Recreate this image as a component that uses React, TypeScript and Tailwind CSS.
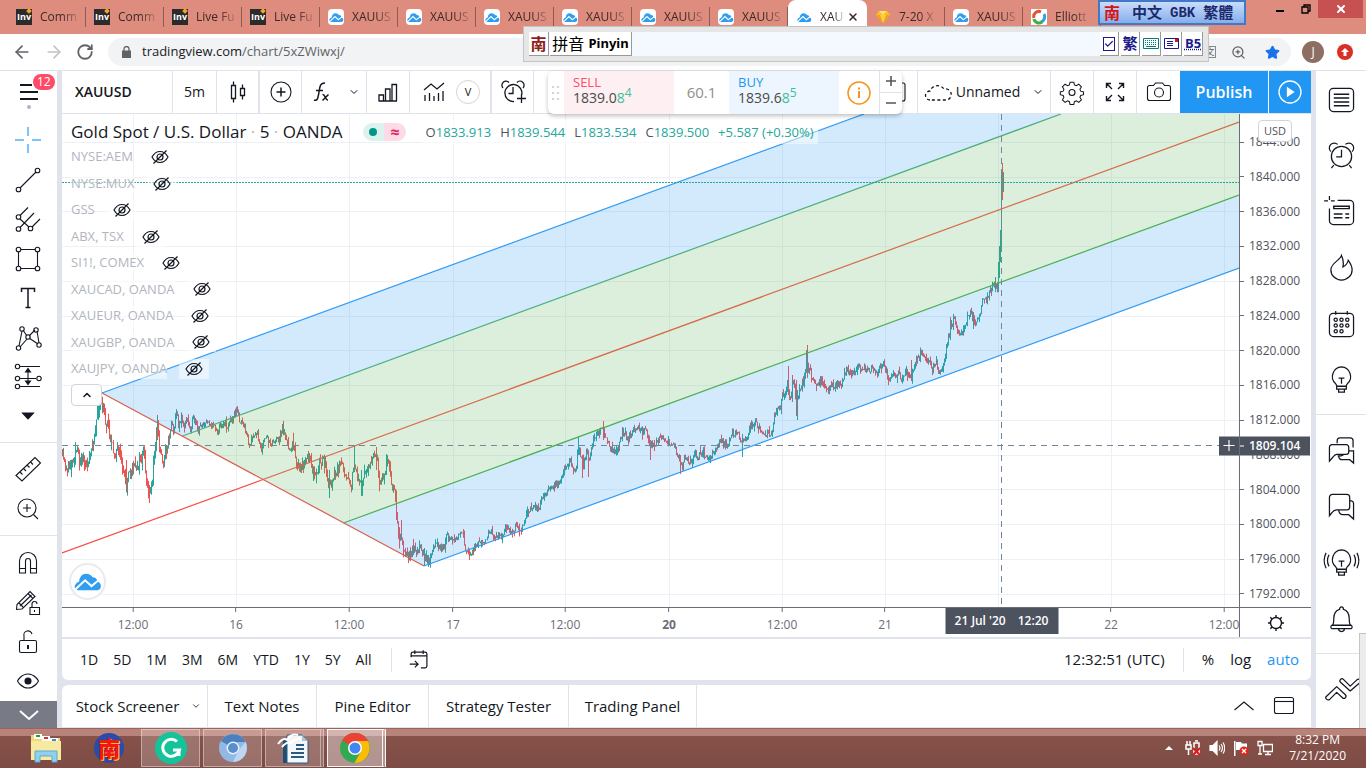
import React from "react";
import { ArrowLeft, ArrowRight, RotateCw, ZoomIn, Star, X, ChevronDown, ChevronUp, Check } from "lucide-react";

type IconProps = { children: React.ReactNode; size?: string; box?: string; width?: number };

const Icon = ({ children, size = "size-7", box = "0 0 28 28", width = 1.1 }: IconProps) => (
  <svg className={`${size} shrink-0`} viewBox={box} fill="none" stroke="currentColor" strokeWidth={width} aria-hidden="true">
    {children}
  </svg>
);

const Cloud = ({ size = "size-4" }: { size?: string }) => (
  <svg className={`${size} shrink-0`} viewBox="0 0 24 24" aria-hidden="true">
    <path d="M3.500 19A3 3 0 0 1 1 14.500Q2 12 4.500 11.500C4.500 8 7 5 10.500 5q3.500 0 5.500 3 3.500 0 4 3.500 3 1 3 4a3.500 3.500 0 0 1-3 3.500z" fill="#2f9df2" />
    <path d="M1 18.500L9.500 10.500 15 15.500 20.500 11" fill="none" stroke="#fff" strokeWidth="1.700" />
  </svg>
);

/* ---------- browser chrome ---------- */

const tabs = [
  { icon: "inv", title: "Comm" },
  { icon: "inv", title: "Comm" },
  { icon: "inv", title: "Live Fu" },
  { icon: "inv", title: "Live Fu" },
  { icon: "tv", title: "XAUUS" },
  { icon: "tv", title: "XAUUS" },
  { icon: "tv", title: "XAUUS" },
  { icon: "tv", title: "XAUUS" },
  { icon: "tv", title: "XAUUS" },
  { icon: "tv", title: "XAUUS" },
  { icon: "tv", title: "XAU", active: true },
  { icon: "gem", title: "7-20 X" },
  { icon: "tv", title: "XAUUS" },
  { icon: "wave", title: "Elliott" },
];

const TabIcon = ({ name }: { name: string }) => {
  if (name === "inv")
    return (
      <span className="relative flex size-4 shrink-0 items-center justify-center bg-[#2b2b2b] text-[9px] font-bold text-white">
        Inv
        <span className="absolute right-px top-0 size-1 rotate-45 bg-[#f5a623]" />
      </span>
    );
  if (name === "gem")
    return (
      <svg className="size-4 shrink-0" viewBox="0 0 16 16" aria-hidden="true">
        <path d="M4 2h8l3 4-7 8-7-8z" fill="#fdbc1f" />
        <path d="M4 2h8l-4 4z" fill="#ffe27a" />
        <path d="M1 6h14l-7 8z" fill="#f5a30c" />
        <path d="M5 6h6l-3 8z" fill="#ffce4a" />
      </svg>
    );
  if (name === "wave")
    return (
      <svg className="size-4 shrink-0" viewBox="0 0 16 16" fill="none" strokeWidth="3" aria-hidden="true">
        <path d="M0 0h16v16H0z" fill="#fff" />
        <path d="M3 9a5 5 0 0 1 7-6" stroke="#e2562d" />
        <path d="M13 5a5.500 5.500 0 0 1-3 8" stroke="#2aa4dc" />
        <path d="M11 13a5 5 0 0 1-8-3" stroke="#3fae49" />
      </svg>
    );
  return (
    <span className="flex size-4 shrink-0 items-center justify-center rounded-sm bg-white">
      <Cloud size="size-[15px]" />
    </span>
  );
};

const TabStrip = () => (
  <div className="flex h-[34px] shrink-0 bg-[#de8c7d] pl-2 text-xs text-[#3b2a28]">
    {tabs.map((tab, i) => (
      <div
        key={i}
        className={
          tab.active
            ? "flex w-[79px] items-center gap-1 rounded-t-lg bg-white px-2"
            : "flex w-[78px] items-center"
        }
      >
        <button
          className={
            tab.active
              ? "flex min-w-0 flex-1 items-center gap-2"
              : "flex h-5 w-full items-center gap-2 border-r border-[#8c5a52] pl-2"
          }
        >
          <TabIcon name={tab.icon} />
          <span className="whitespace-nowrap text-left [mask-image:linear-gradient(to_right,black_60%,transparent_110%)]">
            {tab.title}
          </span>
        </button>
        {tab.active && (
          <button aria-label="Close tab">
            <X className="size-3" strokeWidth={3} />
          </button>
        )}
      </div>
    ))}
    <div className="ml-auto flex items-start pr-[3px] text-black">
      <button aria-label="Minimize" className="flex h-[18px] w-7 items-center justify-center">
        <span className="mt-1 h-0.5 w-2 bg-black" />
      </button>
      <button aria-label="Restore" className="flex h-[18px] w-6 items-center justify-center">
        <Icon size="size-[10px]" box="0 0 10 10" width={1.3}>
          <path d="M1 3h6v6H1zM3 3V1h6v6H7" />
        </Icon>
      </button>
      <button aria-label="Close" className="flex h-[18px] w-[45px] items-center justify-center bg-[#c75050] text-white">
        <X className="size-3" strokeWidth={4} />
      </button>
    </div>
  </div>
);

const AddressBar = () => (
  <div className="flex h-9 shrink-0 items-center bg-white pr-[13px] text-[#5f6368]">
    <button aria-label="Back" className="ml-3 mr-3"><ArrowLeft className="size-5" /></button>
    <button aria-label="Forward" className="mr-3 text-[#c1c3c5]"><ArrowRight className="size-5" /></button>
    <button aria-label="Reload" className="mr-[14px]"><RotateCw className="size-[18px]" strokeWidth={2.4} /></button>
    <div className="flex h-7 flex-1 items-center gap-[11px] rounded-full bg-[#f1f3f4] pl-[14px] pr-[11px]">
      <svg className="h-3 w-[9px]" viewBox="0 0 9 12" aria-hidden="true">
        <path d="M0 4.500h9V12H0z" fill="#5f6368" />
        <path d="M2 5V3a2.500 2.500 0 0 1 5 0v2" fill="none" stroke="#5f6368" strokeWidth="1.300" />
      </svg>
      <p className="flex-1 text-[13px]"><span className="text-[#202124]">tradingview.com</span>/chart/5xZWiwxj/</p>
      <button className="flex size-3 items-center justify-center border border-[#888] text-[9px]">文</button>
      <button aria-label="Zoom" className="ml-1 mr-2"><ZoomIn className="size-[15px]" /></button>
      <button aria-label="Bookmark"><Star className="size-[15px] fill-[#1a73e8] text-[#1a73e8]" /></button>
    </div>
    <button className="ml-[11px] size-[22px] rounded-full bg-[#8d6e63] text-xs text-white">J</button>
    <button aria-label="Update" className="ml-[13px] flex size-4 items-center justify-center rounded-full bg-[#d93025]">
      <svg className="size-[10px]" viewBox="0 0 10 10" aria-hidden="true"><path d="M5 1l4 4H6.500v4h-3V5H1z" fill="#fff" /></svg>
    </button>
  </div>
);

const keyButton = "flex w-[19px] items-center justify-center border-b border-r border-[#999]";

// floating windows of the Chinese input method
const InputMethod = () => (
  <>
    <div className="absolute left-[523px] top-[26px] z-20 flex h-9 w-[686px] border border-[#c4c4c4] bg-[#e6e6e6] p-[5px]">
      <div className="flex flex-1 gap-px bg-[#f3f9ff] text-black">
        <span className="flex w-5 items-center justify-center border-b border-r border-[#999] bg-white text-base font-bold text-[#8f1d1d]">南</span>
        <span className="flex w-[82px] items-center justify-center whitespace-nowrap border-b border-r border-[#999] bg-white font-['Noto_Sans','Noto_Sans_CJK_SC',sans-serif] text-base">
          拼音&nbsp;<b className="text-[13px]">Pinyin</b>
        </span>
        <div className="ml-auto flex gap-0.5 bg-white text-[#1b1b8f]">
          <button className={keyButton} aria-label="Check">
            <span className="flex h-[14px] w-3 items-center justify-center border border-current"><Check className="size-3" strokeWidth={3} /></span>
          </button>
          <button className={`${keyButton} text-[15px] font-bold`}>繁</button>
          <button className={keyButton} aria-label="Keyboard">
            <Icon size="size-4" box="0 0 16 16" width={1}>
              <path d="M.5 2.500h15v10H.5z" stroke="#007c7c" />
              <path d="M2 4.500h12M2 6.500h12M2 8.500h12" stroke="#007c7c" strokeDasharray="1 1" /><path d="M3 10.500h10" stroke="#007c7c" />
            </Icon>
          </button>
          <button className={keyButton} aria-label="Message">
            <Icon size="size-4" box="0 0 16 16" width={1}>
              <path d="M.5 2.500h14v10H.5zM3 5.500h6M3 7.500h6M3 9.500h6" />
              <path d="M11 3h3v3h-3z" fill="#d11" stroke="none" />
            </Icon>
          </button>
          <button className={`${keyButton} text-[13px] font-bold underline decoration-dotted`}>B5</button>
        </div>
      </div>
    </div>
    <div className="absolute left-[1098px] top-0 z-20 flex h-[25px] w-[148px] items-center gap-3 border-2 border-[#4178c8] bg-linear-to-b from-[#c9dcfb] to-[#86aeea] pl-1 text-[15px] font-bold text-[#1a2a6c]">
      <span className="text-base text-[#d81414]">南</span>
      <span>中文</span>
      <span className="-mx-1 font-['Liberation_Mono',monospace] text-sm">GBK</span>
      <span>繁體</span>
    </div>
  </>
);

/* ---------- drawing tools ---------- */

const drawingTools = [
  { label: "Cross", art: <path stroke="#7cc4fd" strokeWidth="2" d="M14 1v9M14 18v9M1 14h9M18 14h9" /> },
  { label: "Trend line", art: <><path d="M6 22L22 6" /><circle cx="4.500" cy="23.500" r="2.300" /><circle cx="23.500" cy="4.500" r="2.300" /></> },
  { label: "Pitchfork", art: <><path d="M6 10.500l8-8M6 22.500L20 8M18 22l8-8M6 14l9 8" /><circle cx="4.500" cy="12" r="2.300" /><circle cx="4.500" cy="24" r="2.300" /><circle cx="16.500" cy="23.500" r="2.300" /></> },
  { label: "Rectangle", art: <><path d="M7 4.500h14M7 23.500h14M4.500 7v14M23.500 7v14" /><circle cx="4.500" cy="4.500" r="2.300" /><circle cx="23.500" cy="4.500" r="2.300" /><circle cx="4.500" cy="23.500" r="2.300" /><circle cx="23.500" cy="23.500" r="2.300" /></> },
  { label: "Text", art: <path strokeWidth="1.500" d="M7.500 8V4.500h13V8M14 4.500v19M11.500 23.500h5" /> },
  { label: "Pattern", art: <><path d="M5 22L8 7M9 6l4 6M15 12l6-6M23 7l2 12M6 23l7-8M15 14l9 6" /><circle cx="4.500" cy="24" r="2.200" /><circle cx="8" cy="5" r="2.200" /><circle cx="14" cy="13" r="2.200" /><circle cx="22" cy="6" r="2.200" /><circle cx="25" cy="21" r="2.200" /></> },
  { label: "Forecast", art: <><path d="M6 3.500h20M6 15.500h16M6 23.500h20M14 7v13" /><path d="M11.500 9L14 5.500 16.500 9zM11.500 18l2.500 3.500 2.500-3.500z" fill="currentColor" /><circle cx="3.500" cy="3.500" r="2.200" /><circle cx="3.500" cy="15.500" r="2.200" /><circle cx="3.500" cy="23.500" r="2.200" /><circle cx="25" cy="15.500" r="2.200" /></> },
  { label: "Icons", art: <path d="M8.500 11h11l-5.500 6z" fill="currentColor" /> },
];

const measureTools = [
  { label: "Measure", art: <><path d="M2 20.500L21 2.500l5.500 5.500L8 26z" /><path d="M6 17l2.500 2.500M9.500 13.500L12 16M13 10l2.500 2.500M16.500 7L19 9.500" /></> },
  { label: "Zoom in", art: <><circle cx="13" cy="13" r="9" /><path d="M13 9v8M9 13h8M19.500 19.500l4.500 4.500" /></> },
];

const lockTools = [
  { label: "Magnet", art: <path d="M5.500 24V12a8.500 8.500 0 0 1 17 0v12h-6V12a2.500 2.500 0 0 0-5 0v12zM5.500 19.500h6M16.500 19.500h6" /> },
  { label: "Stay in drawing mode", art: <><path d="M2.500 20.500l.5-5L16 2.500l5 5L8 20zM5 14l4 4M14 4.500l4.500 4.500M6 17L17.500 6" /><path d="M16 18.500h9.500v7H16z" /><path d="M18 18v-3a2.500 2.500 0 0 1 5 0M20.500 21v2" /></> },
  { label: "Lock all drawings", art: <><rect x="5.500" y="12.500" width="17" height="12" rx="1.500" /><path d="M10 12V8a4 4 0 0 1 8-2" /><path d="M14 17v4" strokeWidth="2" /></> },
  { label: "Hide all drawings", art: <><path d="M3.500 14S7 7 14 7s10.500 7 10.500 7S21 21 14 21 3.500 14 3.500 14z" /><circle cx="14" cy="14" r="3" fill="currentColor" /></> },
];

const ToolGroup = ({ tools, className }: { tools: { label: string; art: React.ReactNode }[]; className: string }) => (
  <div className={`grid auto-rows-fr justify-items-center ${className}`}>
    {tools.map((tool) => (
      <button key={tool.label} aria-label={tool.label} className="flex items-center">
        <Icon>{tool.art}</Icon>
      </button>
    ))}
  </div>
);

const LeftToolbar = () => (
  <aside className="flex w-[57px] shrink-0 flex-col bg-white">
    <button aria-label="Menu" className="relative flex h-[42px] items-center justify-center">
      <Icon width={1.8}><path d="M5 7h12M5 14h18M5 21h18" /></Icon>
      <span className="absolute left-[33px] top-[3px] rounded-full bg-[#ff4a68] px-1 text-xs leading-4 text-white">12</span>
      <span className="absolute bottom-1 size-1 rounded-full bg-[#b2b5be]" />
    </button>
    <ToolGroup tools={drawingTools} className="mt-2 h-[317px] pr-px" />
    <hr className="mt-[6px] border-[#e0e3eb]" />
    <ToolGroup tools={measureTools} className="mt-[6px] h-20 pr-px" />
    <hr className="mt-[6px] border-[#e0e3eb]" />
    <ToolGroup tools={lockTools} className="mt-2 h-[158px] pr-px" />
    <button aria-label="Scroll down" className="mt-auto flex h-[27px] items-center justify-center bg-[#787b86] text-white">
      <Icon width={2}><path d="M5 10l9 8 9-8" /></Icon>
    </button>
  </aside>
);

/* ---------- chart header ---------- */

const cell = "flex shrink-0 items-center justify-center border-r border-[#e0e3eb]";

const TradePanel = () => (
  <div className="absolute left-[486px] top-0 z-10 flex h-[43px] w-[354px] overflow-hidden rounded-md bg-white shadow-[0_2px_4px_rgba(0,0,0,0.25)]">
    <div className="flex w-4 items-center justify-center">
      <svg className="h-4 w-2" viewBox="0 0 8 16" fill="#d1d4dc" aria-hidden="true">
        <path d="M0 1h2v2H0zM5 1h2v2H5zM0 7h2v2H0zM5 7h2v2H5zM0 13h2v2H0zM5 13h2v2H5z" />
      </svg>
    </div>
    <button className="w-[110px] bg-[#fdeff2] pb-1 pl-[9px] text-left text-[#4a4a4a]">
      <span className="block text-[13px] leading-4 text-[#ff4a68]">SELL</span>
      <span className="block text-sm leading-4">1839.0<span className="text-[#3cc194]">8<sup className="text-xs">4</sup></span></span>
    </button>
    <span className="flex w-[55px] items-center justify-center text-[15px] text-[#8f8f8f]">60.1</span>
    <button className="w-[110px] bg-[#edf6fe] pb-1 pl-[9px] text-left text-[#4a4a4a]">
      <span className="block text-[13px] leading-4 text-[#2196f3]">BUY</span>
      <span className="block text-sm leading-4">1839.6<span className="text-[#3cc194]">8<sup className="text-xs">5</sup></span></span>
    </button>
    <button aria-label="Information" className="flex w-[41px] items-center justify-center border-r border-[#e0e3eb] text-[#f7931a]">
      <Icon size="size-6" box="0 0 24 24" width={1.5}><circle cx="12" cy="12" r="11" /><path d="M12 10v7M12 6.500v2" strokeWidth="2" /></Icon>
    </button>
    <div className="grid w-[22px] grid-rows-2 divide-y divide-[#e0e3eb] text-[#555]">
      <button aria-label="Increase" className="flex items-center justify-center"><Icon size="size-3" box="0 0 12 12" width={1.6}><path d="M1 6h10M6 1v10" /></Icon></button>
      <button aria-label="Decrease" className="flex items-center justify-center"><Icon size="size-3" box="0 0 12 12" width={1.6}><path d="M1 6h10" /></Icon></button>
    </div>
  </div>
);

const ChartHeader = () => (
  <header className="relative flex h-[43px] shrink-0 border-b border-[#e0e3eb] bg-white">
    <button className={`${cell} w-[111px] justify-start! pl-[13px] text-sm font-semibold`}>XAUUSD</button>
    <button className={`${cell} w-[44px] text-sm`}>5m</button>
    <button aria-label="Candles" className={`${cell} w-[43px] border-r-2`}>
      <Icon width={1.3}><path d="M7.500 7.500h4v13h-4zM9.500 3.500v4M9.500 20.500v4M16.500 10.500h4v7h-4zM18.500 6.500v4M18.500 17.500v4" /></Icon>
    </button>
    <button aria-label="Compare" className={`${cell} w-[42px]`}>
      <Icon><circle cx="14" cy="14" r="10" /><path d="M14 9.500v9M9.500 14h9" strokeWidth="1.500" /></Icon>
    </button>
    <div className={`${cell} w-[65px] gap-3`}>
      <button aria-label="Indicators">
        <Icon width={1.5}><path d="M6 22c3.500 1.500 4-2 5-8s1-9 6-9M8 12.500h7M14.500 16.500c3-.5 2.500 6 5.500 5.500M20.500 16.500l-6 6" /></Icon>
      </button>
      <button aria-label="Templates"><ChevronDown className="size-3" /></button>
    </div>
    <button aria-label="Financials" className={`${cell} w-[43px]`}>
      <Icon width={1.3}><path d="M5 23V17h4.500v6M11.500 23V11H16v12M18 23V6.500h4.500V23M4.500 23H23" /></Icon>
    </button>
    <div className={`${cell} w-[82px] gap-2 border-r-2`}>
      <button aria-label="Add indicator">
        <Icon width={1.3}><path d="M4 12l7-6 6 5 7-6M5 17v6M9.500 15v8M14 18v5M18.500 15v8M23 13v10" /></Icon>
      </button>
      <button className="size-6 rounded-full border border-[#d1d4dc] text-[11px]">V</button>
    </div>
    <button aria-label="Alert" className={`${cell} w-[42px]`}>
      <Icon width={1.3}><path d="M15 23.500a8.500 8.500 0 1 1 7.500-6M14 9v6.500H9.500M18 20.500h9M22.500 16v9M4 10a4 4 0 0 1 6-5.500M18 4.500A4 4 0 0 1 24 10" /></Icon>
    </button>
    <button aria-label="Layout" className={`${cell} ml-auto w-[43px]`}>
      <Icon><rect x="5" y="5" width="18" height="18" rx="2" /></Icon>
    </button>
    <button className={`${cell} w-[133px] gap-1 text-sm`}>
      <svg className="h-5 w-7" viewBox="0 0 28 20" fill="none" stroke="currentColor" strokeWidth="1.300" strokeDasharray="3 2.500" aria-hidden="true">
        <path d="M6 18a4.500 4.500 0 0 1 0-9 8 8 0 0 1 14-2 5.500 5.500 0 0 1 3 11z" />
      </svg>
      Unnamed
      <ChevronDown className="ml-2 size-3" />
    </button>
    <button aria-label="Settings" className={`${cell} w-[43px]`}>
      <Icon><path d="M12 3.500h4l.7 3 2 .9 2.700-1.700 2.800 2.800-1.600 2.700.8 2 3.100.8v3l-3.100.8-.8 2 1.600 2.700-2.800 2.800-2.700-1.700-2 .9-.7 3h-4l-.7-3-2-.9-2.700 1.700-2.800-2.800 1.600-2.700-.8-2-3.100-.8v-3l3.100-.8.8-2-1.600-2.700 2.800-2.800 2.700 1.700 2-.9z" transform="translate(.9 .9) scale(.93)" /><circle cx="14" cy="14.500" r="3" /></Icon>
    </button>
    <button aria-label="Full screen" className={`${cell} w-[43px]`}>
      <Icon width={1.4}><path d="M5.500 10V5.500H10M5.500 5.500L11 11M18 5.500h4.500V10M22.500 5.500L17 11M5.500 18v4.500H10M5.500 22.500L11 17M22.500 18v4.500H18M22.500 22.500L17 17" /></Icon>
    </button>
    <button aria-label="Snapshot" className="flex w-[43px] items-center justify-center">
      <Icon><path d="M4.500 7.500h4L10.500 5h7l2 2.500h4a2 2 0 0 1 2 2v11a2 2 0 0 1-2 2h-19a2 2 0 0 1-2-2v-11a2 2 0 0 1 2-2z" /><circle cx="14" cy="14.500" r="4.500" /></Icon>
    </button>
    <button className="w-[88px] bg-[#2196f3] text-base font-semibold text-white">Publish</button>
    <button aria-label="Play" className="ml-px flex w-[42px] items-center justify-center bg-[#2196f3] text-white">
      <Icon width={1.3}><circle cx="14" cy="14" r="11" /><path d="M11.500 10v8l6-4z" fill="currentColor" /></Icon>
    </button>
    <TradePanel />
  </header>
);

/* ---------- chart ---------- */

// x, y of the close along the price curve
const curve: number[][] = [
  [62, 456], [65, 466], [68, 470], [72, 462], [76, 450], [80, 460], [82, 453], [85, 468], [89, 457], [92, 446], [95, 425],
  [98, 410], [100, 406], [103, 413], [106, 424], [108, 423], [110, 440], [113, 452], [117, 450], [120, 459], [123, 470],
  [126, 485], [128, 468], [130, 480], [132, 462], [135, 470], [138, 462], [141, 460], [143, 452], [146, 478], [149, 495],
  [152, 478], [155, 440], [157, 420], [159, 448], [163, 463], [166, 448], [169, 435], [171, 422], [173, 430], [176, 413],
  [178, 425], [181, 419], [184, 426], [187, 420], [190, 428], [193, 419], [196, 425], [198, 431], [202, 423], [205, 425],
  [208, 419], [211, 428], [214, 423], [217, 433], [221, 425], [224, 422], [227, 427], [230, 420], [233, 415], [236, 411],
  [240, 422], [245, 428], [248, 443], [250, 446], [253, 437], [257, 433], [261, 448], [264, 441], [267, 438], [270, 443],
  [275, 441], [279, 438], [282, 428], [285, 437], [288, 450], [291, 446], [294, 450], [297, 465], [300, 473], [304, 460],
  [308, 458], [311, 465], [315, 479], [320, 465], [323, 455], [326, 472], [329, 487], [332, 478], [336, 472], [340, 465],
  [344, 470], [347, 476], [351, 484], [354, 463], [357, 478], [361, 488], [364, 472], [368, 463], [371, 464], [374, 455],
  [376, 453], [379, 480], [383, 474], [387, 462], [389, 468], [391, 482], [394, 490], [396, 515], [398, 540], [400, 533],
  [402, 545], [406, 555], [410, 553], [413, 548], [416, 552], [420, 550], [424, 558], [429, 558], [431, 552], [435, 545],
  [440, 546], [444, 546], [446, 535], [450, 540], [454, 538], [460, 533], [463, 535], [465, 550], [468, 555], [472, 554],
  [476, 545], [478, 538], [484, 541], [490, 532], [495, 536], [502, 537], [505, 528], [510, 532], [515, 527], [520, 530],
  [524, 522], [527, 510], [534, 507], [538, 510], [541, 500], [548, 490], [553, 485], [560, 482], [564, 470], [570, 460],
  [575, 472], [578, 448], [580, 455], [583, 465], [586, 448], [589, 460], [592, 443], [596, 435], [601, 428], [604, 433],
  [608, 445], [613, 454], [618, 448], [622, 430], [628, 438], [633, 432], [640, 430], [646, 432], [650, 445], [656, 444],
  [662, 435], [667, 443], [673, 445], [678, 458], [681, 468], [684, 458], [688, 464], [695, 456], [702, 455], [710, 458],
  [716, 448], [722, 440], [727, 447], [731, 435], [736, 433], [740, 440], [745, 440], [750, 427], [755, 420], [760, 430],
  [766, 433], [772, 433], [774, 415], [780, 408], [782, 397], [787, 385], [790, 398], [793, 380], [796, 404], [799, 390],
  [803, 380], [806, 366], [809, 370], [812, 378], [816, 388], [820, 380], [826, 387], [832, 386], [840, 385], [846, 370],
  [852, 373], [857, 366], [862, 371], [868, 368], [874, 373], [880, 367], [884, 365], [888, 378], [893, 373], [899, 374],
  [902, 382], [906, 372], [911, 376], [917, 357], [921, 352], [926, 358], [932, 369], [936, 360], [938, 370], [943, 368],
  [946, 350], [950, 330], [952, 322], [954, 320], [957, 330], [961, 334], [965, 328], [967, 315], [971, 313], [975, 322],
  [979, 318], [982, 302], [986, 300], [989, 293], [991, 288], [994, 284], [997, 288], [998, 280],
];

// x, high, low, rising
const spikes: [number, number, number, boolean][] = [
  [98, 402, 420, true], [126, 460, 492, false], [149, 485, 503, false], [157, 415, 440, false], [236, 407, 416, false],
  [329, 470, 498, true], [354, 445, 472, true], [361, 470, 496, true], [376, 447, 470, false], [401, 520, 535, false],
  [424, 548, 566, true], [469, 550, 560, false], [578, 437, 455, true], [582, 455, 478, false], [588, 450, 477, false],
  [603, 421, 440, false], [650, 440, 460, false], [680, 455, 474, false], [742, 440, 457, true], [788, 366, 395, false],
  [792, 375, 402, false], [796, 380, 416, false], [797, 390, 420, true], [807, 345, 378, false], [806, 350, 372, true],
  [911, 360, 381, false], [950, 317, 340, false], [953, 314, 330, true], [973, 312, 329, true], [995, 277, 292, true],
  [998, 262, 292, true], [999, 246, 278, true], [1000, 230, 262, true], [1001, 170, 250, true], [1002, 163, 200, false],
  [1003, 172, 192, true],
];

function buildCandles() {
  let up = "";
  let down = "";
  let seed = 11;
  const rand = () => (seed = (seed * 16807) % 2147483647) / 2147483647;
  let last = curve[0][1];
  for (let i = 1; i < curve.length; i++) {
    const [x0, y0] = curve[i - 1];
    const [x1, y1] = curve[i];
    for (let x = x0; x < x1; x++) {
      const reach = x < 170 || (x > 290 && x < 430) ? 11 : 7;
      const close = y0 + ((y1 - y0) * (x - x0)) / (x1 - x0) + (rand() - 0.5) * reach;
      const high = Math.min(last, close) - rand() * rand() * reach;
      const low = Math.max(last, close) + rand() * rand() * reach;
      const bar = `M${x + 0.5} ${high.toFixed(1)}V${low.toFixed(1)}`;
      if (close < last) up += bar;
      else down += bar;
      last = close;
    }
  }
  for (const [x, high, low, rising] of spikes) {
    const bar = `M${x + 0.5} ${high}V${low}`;
    if (rising) up += bar;
    else down += bar;
  }
  return { up, down };
}

const candles = buildCandles();

const times = [
  { x: 133, label: "12:00" }, { x: 236, label: "16" }, { x: 349, label: "12:00" }, { x: 453, label: "17" },
  { x: 565, label: "12:00" }, { x: 669, label: "20", bold: true }, { x: 782, label: "12:00" }, { x: 885, label: "21" },
  { x: 998, label: "" }, { x: 1111, label: "22" }, { x: 1224, label: "12:00" },
];

const prices = Array.from({ length: 14 }, (_, i) => 1844 - i * 4);

const timeLeft = (x: number) => `${((x - 62) / 1177) * 100}%`;
const priceY = (price: number) => 142.3 + (1844 - price) * 8.692;
const priceTop = (price: number) => `${((priceY(price) - 114) / 493) * 100}%`;

const Plot = () => (
  <svg className="absolute inset-0 size-full" viewBox="62 114 1177 493" preserveAspectRatio="none" fill="none" role="img" aria-label="Gold price chart">
    <g stroke="#eef0f8">
      {times.map((t) => <path key={t.x} d={`M${t.x + 0.5} 114V607`} />)}
      {prices.map((p) => <path key={p} d={`M62 ${Math.floor(priceY(p)) + 0.5}H1239`} />)}
    </g>
    <path d={candles.down} stroke="#ef5350" />
    <path d={candles.up} stroke="#26a69a" />
    <g fillOpacity="0.2">
      <path d="M102 393L864 114H1061L182.500 436z" fill="#2196f3" />
      <path d="M182.500 436L1061 114H1239V195L343.500 523z" fill="#4caf50" />
      <path d="M343.500 523L1239 195V268L424 566z" fill="#2196f3" />
    </g>
    <g strokeWidth="1.200">
      <path d="M62 553L263 479.500" stroke="#fb4a43" />
      <path d="M263 479.500L1239 122" stroke="#d9694a" />
      <path d="M102 393L424 566" stroke="#d9604f" />
      <path d="M182.500 436L1061 114" stroke="#4caf7d" />
      <path d="M343.500 523L1239 195" stroke="#4caf50" />
      <path d="M102 393L864 114M424 566L1239 268" stroke="#2f9bf5" />
    </g>
    <path d="M62 182.500H1239" stroke="#26a69a" strokeDasharray="2 1" />
    <path d="M62 445.500H1219M1001.500 114V607" stroke="#758696" strokeDasharray="6 5" />
  </svg>
);

const studies = ["NYSE:AEM", "NYSE:MUX", "GSS", "ABX, TSX", "SI1!, COMEX", "XAUCAD, OANDA", "XAUEUR, OANDA", "XAUGBP, OANDA", "XAUJPY, OANDA"];

const ohlc = [["O", "1833.913"], ["H", "1839.544"], ["L", "1833.534"], ["C", "1839.500"]];

const Legend = () => (
  <div className="absolute left-[9px] top-[6px]">
    <div className="flex h-6 items-center whitespace-nowrap">
      <h1 className="text-[17px]">Gold Spot / U.S. Dollar <span className="text-[#b2b5be]">·</span> 5 <span className="text-[#b2b5be]">·</span> OANDA</h1>
      <span className="ml-5 flex h-[18px] w-[43px] shrink-0 overflow-hidden rounded-full">
        <span className="flex flex-1 items-center justify-center bg-[#dcf2ee]"><span className="size-2 rounded-full bg-[#009688]" /></span>
        <span className="flex flex-1 items-center justify-center bg-[#fbdbe6] text-base font-bold text-[#e91e63]">≈</span>
      </span>
      <p className="ml-4 flex gap-[9px] bg-white/50 px-1 text-[13px] leading-6 text-[#26a69a]">
        {ohlc.map(([key, value]) => <span key={key}><span className="text-[#50535e]">{key}</span>{value}</span>)}
        <span>+5.587 (+0.30%)</span>
      </p>
    </div>
    <ul className="grid h-[238px] auto-rows-fr justify-items-start text-[13px] text-[#b2b5be]">
      {studies.map((name) => (
        <li key={name} className="flex items-center gap-3">
          <span className="bg-white/50">{name}</span>
          <button aria-label={`Show ${name}`} className="bg-white/50 px-1 text-[#131722]">
            <Icon size="h-5 w-[22px]" box="0 0 22 20" width={1.2}>
              <path d="M3 10s3-5.500 8-5.500S19 10 19 10s-3 5.500-8 5.500S3 10 3 10z" />
              <circle cx="11" cy="10" r="3" />
              <path d="M4.500 16.500l13-13" />
            </Icon>
          </button>
        </li>
      ))}
    </ul>
    <button aria-label="Collapse legend" className="mt-0.5 flex h-[22px] w-[31px] items-center justify-center rounded-sm border border-[#d1d4dc] bg-white">
      <ChevronUp className="size-3" strokeWidth={3} />
    </button>
  </div>
);

const PriceAxis = () => (
  <div className="relative flex w-[72px] shrink-0 flex-col justify-between border-l border-[#6a6d78] bg-white pb-[5px] pt-5 text-xs leading-4 text-[#50535e]">
    {prices.map((p) => (
      <div key={p} className="flex items-center gap-[5px]">
        <span className="h-px w-1 bg-[#6a6d78]" />
        {p}.000
      </div>
    ))}
    <button className="absolute left-[18px] top-[6px] h-[22px] w-[34px] rounded-sm border border-[#d1d4dc] bg-white text-[11px]">USD</button>
    <div className="absolute -left-[21px] flex h-[19px] w-[91px] -translate-y-1/2 text-white" style={{ top: priceTop(1809.104) }}>
      <button aria-label="Add at price" className="mr-px flex w-5 items-center justify-center bg-[#4c525e]">
        <Icon size="size-3" box="0 0 12 12"><path d="M.5 6h11M6 .5v11" /></Icon>
      </button>
      <span className="flex flex-1 items-center gap-[5px] bg-[#4c525e] font-semibold"><span className="h-px w-1 bg-white" />1809.104</span>
    </div>
  </div>
);

const TimeAxis = () => (
  <div className="flex h-[30px] shrink-0 border-t border-[#6a6d78] bg-white text-xs text-[#6a6d78]">
    <div className="relative flex-1 overflow-hidden">
      {times.map((t) => (
        <div key={t.x} className="absolute flex -translate-x-1/2 flex-col items-center gap-[5px]" style={{ left: timeLeft(t.x) }}>
          <span className="h-1 w-px bg-[#6a6d78]" />
          <span className={t.bold ? "font-bold" : ""}>{t.label}</span>
        </div>
      ))}
      <div className="absolute top-0 flex h-[26px] w-[113px] -translate-x-1/2 items-center justify-center gap-3 bg-[#4c525e] font-semibold text-white" style={{ left: timeLeft(1001.5) }}>
        <span>21 Jul '20</span><span>12:20</span>
      </div>
    </div>
    <button aria-label="Axis settings" className="flex w-[72px] items-center justify-center border-l border-[#6a6d78] text-[#131722]">
      <Icon size="size-[18px]" box="0 0 18 18" width={1.4}>
        <circle cx="9" cy="9" r="5.500" />
        <path d="M9 1v2.500M9 14.500V17M1 9h2.500M14.500 9H17M3.300 3.300L5 5M13 13l1.700 1.700M14.700 3.300L13 5M5 13l-1.700 1.700" />
      </Icon>
    </button>
  </div>
);

const ranges = ["1D", "5D", "1M", "3M", "6M", "YTD", "1Y", "5Y", "All"];

const RangeBar = () => (
  <div className="mt-0.5 flex h-[41px] shrink-0 items-center rounded-b-md bg-white pl-[18px] pr-3 text-sm">
    <div className="flex gap-[15px]">
      {ranges.map((r) => <button key={r}>{r}</button>)}
    </div>
    <span className="ml-5 h-6 w-px bg-[#e0e3eb]" />
    <button aria-label="Go to date" className="ml-[14px]">
      <Icon size="size-[26px]" width={1.3}><path d="M5.500 11V7.500a2 2 0 0 1 2-2h13a2 2 0 0 1 2 2v13a2 2 0 0 1-2 2H16M6 9.500h16M9.500 3.500v4M18.500 3.500v4M4 18.500h8.500M9.500 15l3.500 3.500L9.500 22" /></Icon>
    </button>
    <button className="ml-auto text-[15px]">12:32:51 (UTC)</button>
    <span className="mx-[18px] h-6 w-px bg-[#e0e3eb]" />
    <button className="text-[15px]">%</button>
    <button className="ml-4 text-[15px]">log</button>
    <button className="ml-4 text-[15px] text-[#2196f3]">auto</button>
  </div>
);

const BottomTabs = () => (
  <div className="mt-[5px] flex h-[43px] shrink-0 items-stretch rounded-t-md border-b border-[#e0e3eb] bg-white text-[15px]">
    <button className={`${cell} w-[146px] gap-3 pl-2`}>Stock Screener<ChevronDown className="size-[10px]" /></button>
    <button className={`${cell} w-[109px]`}>Text Notes</button>
    <button className={`${cell} w-[112px]`}>Pine Editor</button>
    <button className={`${cell} w-[140px]`}>Strategy Tester</button>
    <button className={`${cell} w-[128px]`}>Trading Panel</button>
    <button aria-label="Open panel" className="ml-auto"><Icon><path d="M4.500 18l9.500-8 9.500 8" /></Icon></button>
    <button aria-label="Maximize panel" className="ml-3 mr-[13px]">
      <Icon><rect x="4.500" y="5.500" width="19" height="16" rx="2" /><path d="M5 9.500h18" /></Icon>
    </button>
  </div>
);

/* ---------- right sidebar ---------- */

const bulb = "M14 1a10 10 0 0 0-6 17.500q1 1 1 2.500h10q0-1.500 1-2.500A10 10 0 0 0 14 1zM9 21v3h10v-3M11 24v3h6v-3M11 12.500h6M14 12.500v6";

const widgets = [
  { label: "Watchlist", art: <><rect x="1.500" y="2.500" width="25" height="24" rx="4" /><path strokeWidth="1.500" d="M6 8.500h16M6 12.500h16M6 16.500h16M6 20.500h16" /></> },
  { label: "Alerts", art: <><circle cx="14" cy="15" r="10.500" /><path d="M14 8v7.500H8.500M6 24l-2.500 3M22 24l2.500 3M3 10a5 5 0 0 1 7-7.500M18 2.500a5 5 0 0 1 7 7.500" /></> },
  { label: "News", art: <><path d="M10 2.500h12.500a4 4 0 0 1 4 4v17a4 4 0 0 1-4 4h-17a4 4 0 0 1-4-4V11" /><path d="M6 8.500h16v2.500H6z" strokeWidth="1.500" /><path d="M6 16.500h9M6 20.500h9M18 16.500h4M18 20.500h4" strokeWidth="1.500" /><path d="M1.500-2v4M-4 3h4M3 3h4" /></> },
  { label: "Hotlist", art: <path d="M14 1.500c-1 5-11 7.500-11 15A11 10.500 0 0 0 25 16.500c0-4-1-6-4-10-.5 3-2 5-5.500 7 1-5 .500-8-1.500-12z" /> },
  { label: "Calendar", art: <><rect x="1.500" y="3.500" width="25" height="24" rx="4" /><path d="M8 1v4M20 1v4" /><g><circle cx="8" cy="10" r="1.700" /><circle cx="14" cy="10" r="1.700" /><circle cx="20" cy="10" r="1.700" /><circle cx="8" cy="16" r="1.700" /><circle cx="14" cy="16" r="1.700" /><circle cx="20" cy="16" r="1.700" /><circle cx="8" cy="22" r="1.700" /><circle cx="14" cy="22" r="1.700" /></g></> },
  { label: "Ideas", art: <path d={bulb} /> },
];

const social = [
  { label: "Public chats", art: <><path d="M9.500 6.500V4a3 3 0 0 1 3-3H23a3 3 0 0 1 3 3v7M10 19.500h3.500l2.500-1" /><path d="M4.500 8h14.500a2.500 2.500 0 0 1 2.500 2.500v5A2.500 2.500 0 0 1 19 18H9q-2 0-4 3l-3.500 4V10.500A2.500 2.500 0 0 1 4.500 8zM22 14.500h4.500V27l-4-3.500h-8q-3 0-3.500-4" /></> },
  { label: "Private chats", art: <path d="M4.500 1.500h15a3 3 0 0 1 3 3v10a3 3 0 0 1-3 3H9q-3 0-5 3l-2.500 3V4.500a3 3 0 0 1 3-3zM22.500 8q4 0 4 3v16l-5-4.500h-6q-4 0-4.500-5" /> },
  { label: "Ideas stream", art: <><path d={bulb} /><path d="M1 6q-3 6 0 12M-2 4q-4 8 0 16M27 6q3 6 0 12M30 4q4 8 0 16" /></> },
  { label: "Notifications", art: <path d="M4 24.500a2 2 0 0 1 0-3.500q2 0 2-7c0-6 2.500-8.500 6-9.500q0-2.500 2-2.500t2 2.500c3.500 1 6 3.500 6 9.500q0 7 2 7a2 2 0 0 1 0 3.500zM4 21h20M11 25q0 2.500 3 2.500t3-2.500" /> },
];

const Widget = ({ label, art }: { label: string; art: React.ReactNode }) => (
  <button aria-label={label} className="flex h-14 w-full items-center justify-center">
    <svg className="size-[27px] overflow-visible" viewBox="0 0 28 28" fill="none" stroke="currentColor" strokeWidth="1.300" aria-hidden="true">{art}</svg>
  </button>
);

const RightSidebar = () => (
  <aside className="relative w-[50px] shrink-0 bg-white">
    {widgets.map((w) => <Widget key={w.label} {...w} />)}
    <hr className="my-[7px] border-[#e0e3eb]" />
    {social.map((w) => <Widget key={w.label} {...w} />)}
    <hr className="my-[7px] border-[#e0e3eb]" />
    <Widget
      label="Order panel"
      art={
        <g strokeLinejoin="round">
          <path d="M-2 21.500L9 11l9 8.500q1.500 1.500 0 3t-3 0L9 17l-7 7q-2 1.500-3.500 0t-.5-2.500z" />
          <path d="M13 6.500q-1.500-1.500 0-3t3 0l7 7 7-6.500q2-1.500 3 0t0 3L23 15.500z" />
        </g>
      }
    />
    <div className="absolute bottom-0 right-0 h-[95px] w-[7px] border-l border-t border-[#c4c4c4] bg-[#ececec]" />
  </aside>
);

/* ---------- windows taskbar ---------- */

const taskButton = "flex w-[59px] items-center justify-center border border-white/40 bg-white/20";

const Taskbar = () => (
  <footer className="flex h-10 shrink-0 border-t border-[#9c655c] bg-[linear-gradient(#b8837a_0px,#b8837a_7px,#86524a_7px,#7e4c45_100%)] pb-px text-white">
    <div className="flex flex-1 gap-[3px] pl-[15px]">
      <button aria-label="File Explorer" className="flex w-[62px] items-center justify-center">
        <svg className="h-8 w-9" viewBox="0 0 36 32" aria-hidden="true">
          <path d="M3 3h9l2 3h18v22H3z" fill="#efd977" />
          <path d="M6 2h8v5H6zM14 4h8v5h-8zM22 6h8v5h-8z" fill="#fff" />
          <path d="M8 3h4v2H8z" fill="#19a83a" /><path d="M16 5h4v2h-4z" fill="#d9362b" /><path d="M24 7h4v2h-4z" fill="#2f8fe0" />
          <path d="M3 9h30v19H3z" fill="#f7e9a0" />
          <path d="M7 30V19h22v11h-5v-6H12v6z" fill="#8fd0ee" stroke="#5caad0" />
        </svg>
      </button>
      <button className="flex w-[58px] items-center justify-center" aria-label="NJStar">
        <span className="flex size-[30px] items-center justify-center rounded-full bg-[#2c4aa8] text-[22px] font-black leading-none text-[#f31616] [text-shadow:1px_1px_0_#ffc21a]">南</span>
      </button>
      <button className={taskButton} aria-label="Grammarly">
        <svg className="size-8" viewBox="0 0 32 32" fill="none" stroke="#fff" strokeWidth="3" aria-hidden="true">
          <circle cx="16" cy="16" r="16" fill="#15c39a" stroke="none" />
          <path d="M22 9.500A8.500 8.500 0 1 0 24.500 18H18M24 17v7" />
        </svg>
      </button>
      <button className={taskButton} aria-label="Chromium">
        <svg className="size-[30px]" viewBox="0 0 30 30" aria-hidden="true">
          <circle cx="15" cy="15" r="14" fill="#92b9e4" />
          <path d="M15 15L3 8a14 14 0 0 1 24.500 1H15z" fill="#4b7fbd" />
          <path d="M15 29l6-12 6.500-8A14 14 0 0 1 15 29z" fill="#bed6f0" />
          <circle cx="15" cy="15" r="6.500" fill="#e6f0fa" /><circle cx="15" cy="15" r="5" fill="#5b8fcb" />
        </svg>
      </button>
      <button className={`${taskButton} border-r-4 border-double`} aria-label="Writer">
        <svg className="size-8" viewBox="0 0 32 32" aria-hidden="true">
          <path d="M6 7h6v24H6z" fill="#1d4f75" />
          <path d="M10 3h15l6 6v22H10z" fill="#f4f7fa" stroke="#2a5a80" />
          <path d="M25 3v6h6z" fill="#a8c4d8" />
          <path d="M19 13h8M19 17h8M14 21h13M14 25h13" stroke="#2a5a80" strokeWidth="2" />
          <path d="M1 12q5-7 9-4 4-7 11-5M5 15q5-6 9-4 3-5 10-4" fill="none" stroke="#fff" strokeWidth="2" />
        </svg>
      </button>
      <button className="flex w-[59px] items-center justify-center border border-r-4 border-double border-white/90 bg-white/40" aria-label="Chrome">
        <svg className="size-[30px]" viewBox="0 0 30 30" aria-hidden="true">
          <circle cx="15" cy="15" r="15" fill="#34a853" />
          <path d="M15 15L2 7.500a15 15 0 0 1 26 0z" fill="#ea4335" />
          <path d="M15 8h13a15 15 0 0 1-13.500 22L21 18z" fill="#fbbc05" />
          <circle cx="15" cy="15" r="7" fill="#fff" /><circle cx="15" cy="15" r="5.500" fill="#4285f4" />
        </svg>
      </button>
    </div>
    <div className="flex items-center gap-2 pr-5 text-xs">
      <button aria-label="Show hidden icons"><svg className="h-1 w-2" viewBox="0 0 8 4" fill="#fff" aria-hidden="true"><path d="M0 4l4-4 4 4z" /></svg></button>
      <svg className="ml-1 size-4" viewBox="0 0 16 16" fill="none" stroke="#fff" strokeWidth="1.500" aria-hidden="true">
        <path d="M2 1v4M5 1v4M1 5h5v4H1zM3.500 9v6M9 3h5v11H9zM10 1h3" /><path d="M8 8l7 7M15 8l-7 7" stroke="#e01818" strokeWidth="2" />
      </svg>
      <svg className="size-4" viewBox="0 0 16 16" fill="none" stroke="#fff" strokeWidth="1.200" aria-hidden="true">
        <path d="M1 5.500h3l4-4v13l-4-4H1z" fill="#fff" /><path d="M10 5.500q2 2.500 0 5M12 4q3 4 0 8M14 2.500q3.500 5.500 0 11" />
      </svg>
      <svg className="size-4" viewBox="0 0 16 16" aria-hidden="true">
        <path d="M1 1h1.500v15H1zM3 2h5l1 1.500h5V10H3z" fill="#fff" /><circle cx="11" cy="11" r="4.500" fill="#dc2a1e" /><path d="M9 9l4 4M13 9l-4 4" stroke="#fff" strokeWidth="1.300" />
      </svg>
      <svg className="size-4" viewBox="0 0 16 16" fill="none" stroke="#fff" strokeWidth="1.300" aria-hidden="true">
        <path d="M1 1.500h4v4H1zM3 5.500V14M6.500 4.500h9v7h-9zM11 11.500V14M8 14.500h6M1 14h4" />
      </svg>
      <p className="ml-2 text-center leading-4">8:32 PM<br />7/21/2020</p>
    </div>
  </footer>
);

const App = () => (
  <div className="relative flex h-screen min-h-[768px] w-full flex-col overflow-hidden bg-white font-['Open_Sans','Noto_Sans_CJK_SC',sans-serif] text-[#131722]">
    <TabStrip />
    <AddressBar />
    <InputMethod />
    <div className="flex min-h-0 flex-1 gap-[5px] border-t border-[#e0e3eb] bg-[#e0e3eb]">
      <LeftToolbar />
      <main className="flex min-w-0 flex-1 flex-col">
        <ChartHeader />
        <div className="flex min-h-0 flex-1">
          <div className="relative min-w-0 flex-1 bg-white">
            <Plot />
            <Legend />
            <div className="absolute bottom-[7px] left-[7px] flex size-[37px] items-center justify-center rounded-full border-2 border-[#e8eaf0] bg-white">
              <Cloud size="size-7" />
            </div>
          </div>
          <PriceAxis />
        </div>
        <TimeAxis />
        <RangeBar />
        <BottomTabs />
      </main>
      <RightSidebar />
    </div>
    <Taskbar />
  </div>
);

export default App;
